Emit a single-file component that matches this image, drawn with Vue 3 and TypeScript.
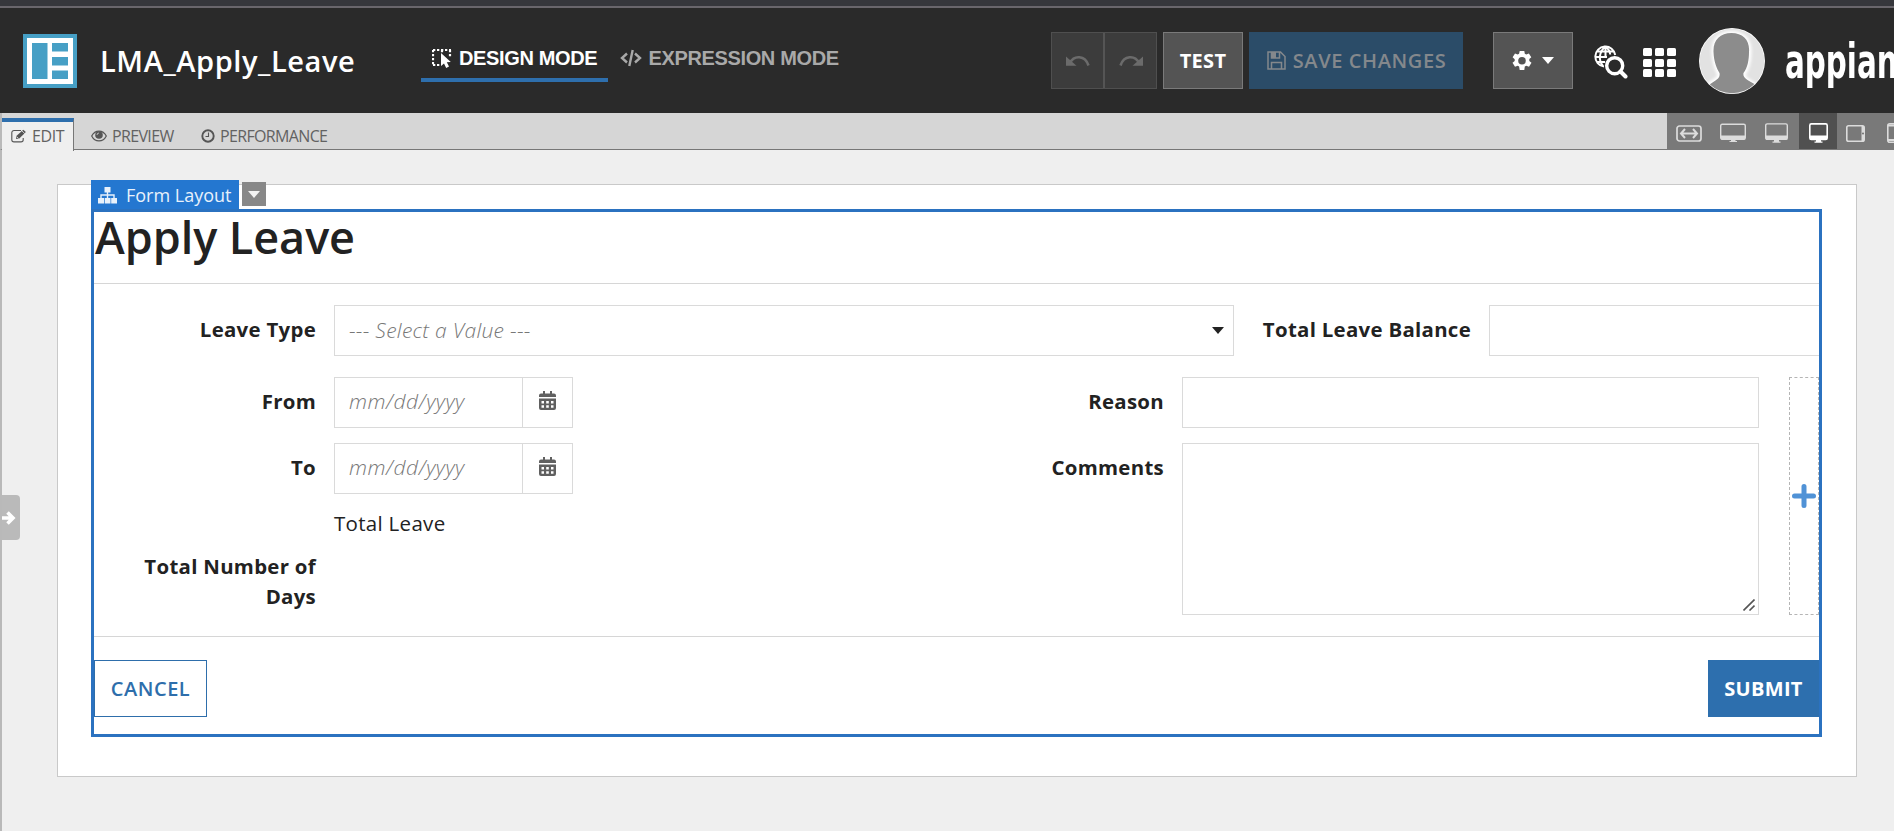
<script setup lang="ts">
import { ref } from 'vue'

interface Tab { id: string; label: string }
const tabs: Tab[] = [
  { id: 'edit', label: 'EDIT' },
  { id: 'preview', label: 'PREVIEW' },
  { id: 'performance', label: 'PERFORMANCE' },
]
const activeTab = ref('edit')
const dates = ['From', 'To']
</script>

<template>
  <div class="page">
    <div class="strip"></div>
    <header class="header">
      <svg class="app-icon" viewBox="0 0 54 54"><path fill="#469fc5" d="M0 0h54v54H0z" /><path fill="#fff" d="M4 4h46v46H4z" /><path fill="#469fc5" d="M9 9h15.500v36H9zM29 9h16v8.500H29zM29 23h16v8.500H29zM29 36.500h16V45H29z" /></svg>
      <h1 class="app-title"><span>LMA_Apply_Leave</span></h1>
      <nav class="modes">
        <div class="mode on">
          <svg class="i-design" viewBox="0 0 20 20"><path d="M1 1h18M1 1v16M1 16h7M18 1v7M10 1v3" fill="none" stroke="#fff" stroke-width="2.200" stroke-dasharray="2.300 1.700" /><path d="M9 4v13l3-2.600 2.200 4.500 2.800-1.300-2.200-4.300 4-.3z" fill="#fff" /></svg>
          <span class="t-design">DESIGN MODE</span>
        </div>
        <div class="mode">
          <svg class="i-code" viewBox="0 0 22 18"><path d="M7 4.500 2 9l5 4.500M15 4.500 20 9l-5 4.500M12.700 1 9.300 17" fill="none" stroke="#a9a9a9" stroke-width="2.400" /></svg>
          <span class="t-expr">EXPRESSION MODE</span>
        </div>
      </nav>
      <div class="actions">
        <div class="history">
          <button class="hbtn"><svg viewBox="0 0 24 12"><path d="M4 8C8 0 19 0 22.500 10.500" fill="none" stroke="#6b6b6b" stroke-width="2.600" /><path d="M0 1.500 10.500 10.800H0z" fill="#6b6b6b" /></svg></button>
          <button class="hbtn"><svg viewBox="0 0 24 12"><path d="M20 8C16 0 5 0 1.500 10.500" fill="none" stroke="#6b6b6b" stroke-width="2.600" /><path d="M24 1.500 13.500 10.800H24z" fill="#6b6b6b" /></svg></button>
        </div>
        <button class="test"><span>TEST</span></button>
        <button class="save">
          <svg viewBox="0 0 19 19"><path d="M1 1h12.500L18 5.500V18H1zM4.500 18v-6.500h10V18M4.500 1v6h8V1" fill="none" stroke="#84888c" stroke-width="1.500" /><path d="M5 1h4v6H5z" fill="#84888c" /></svg>
          <span>SAVE CHANGES</span>
        </button>
        <button class="gear">
          <svg class="i-gear" viewBox="0 0 22 22"><path fill="#fff" fill-rule="evenodd" d="M8.700 1h4.600l.5 2.800 1.500.8 2.600-1.200 2.400 3.800-2 1.900v1.800l2.200 1.900-2.500 3.900-2.700-1-1.500.8-.5 3.500H8.700l-.6-3.500-1.400-.8-2.700 1L1.500 12.800 3.700 11V9.200L1.600 7.300 4 3.400l2.700 1.200 1.400-.8zM11 7a3.800 3.800 0 1 0 0 7.600A3.800 3.800 0 0 0 11 7z" /></svg>
          <svg class="caret" viewBox="0 0 12 7"><path fill="#fff" d="M0 0h12L6 7z" /></svg>
        </button>
      </div>
      <svg class="i-globe" viewBox="0 0 34 34"><g fill="none" stroke="#fff" stroke-width="2"><path d="M10 21.500A10 10 0 1 1 21.200 10M3 6.500h17M2 12h11M3 17h8" /><path d="M11.500 1.500C4.500 7 4.500 16 9 21M11.500 1.500c3 2.500 4.500 5 4.700 8M11.500 1.500v11" /></g><circle cx="20.700" cy="20.700" r="8" fill="#2a2a2a" stroke="#fff" stroke-width="3.400" /><path d="m26.500 26.500 5 5" stroke="#fff" stroke-width="4" stroke-linecap="round" /></svg>
      <div class="waffle"><i v-for="n in 9" :key="n"></i></div>
      <svg class="avatar" viewBox="0 0 66 66"><defs><clipPath id="round"><circle cx="33" cy="33" r="32.300" /></clipPath><filter id="halo"><feGaussianBlur stdDeviation="1.800" /></filter></defs><circle cx="33" cy="33" r="33" fill="#fff" /><g clip-path="url(#round)"><path fill="#e2e2e2" d="M0 0h66v66H0z" /><path d="M32.500 5C21 5 14 12 14.500 24c.3 10 3.500 18 5.500 22 1 4-3 6-11 11v15h48V57c-9-5-13-7-12-11 4-6 5.500-14 5.500-22C51 12 44 5 32.500 5z" fill="#fff" stroke="#fff" stroke-width="4" filter="url(#halo)" /><path d="M32.500 5C21 5 14 12 14.500 24c.3 10 3.500 17 6 21 1 5-3 7-11 12v15h48V57c-9-5-14-7-13-12 4-5 5.500-13 5.500-21C51 12 44 5 32.500 5z" fill="#8c8c8c" /></g></svg>
      <div class="brand"><span>appian</span></div>
    </header>

    <div class="toolbar">
      <div v-for="t in tabs" :key="t.id" class="tab" :class="[t.id, { current: t.id === activeTab }]" @click="activeTab = t.id">
        <svg v-if="t.id === 'edit'" viewBox="0 0 16 14"><path d="M10 1.500H3A2.200 2.200 0 0 0 .8 3.700v7A2.200 2.200 0 0 0 3 12.900h7a2.200 2.200 0 0 0 2.200-2.200V9" fill="none" stroke="#555" stroke-width="1.100" /><path d="m5 10 .6-3.300L12.300.8l2.600 2.300-6.600 6.300z" fill="#555" /><path d="m6 8 1.500 1.400M11 2l2.700 2.500" stroke="#efefef" stroke-width=".8" /></svg>
        <svg v-else-if="t.id === 'preview'" viewBox="0 0 16 12"><path d="M.7 6C4-.6 12-.6 15.300 6 12 12.600 4 12.600.7 6z" fill="none" stroke="#555" stroke-width="1.200" /><circle cx="8" cy="5" r="3.800" fill="#555" /><path d="M6 5a2 2 0 0 1 2-2" fill="none" stroke="#d6d6d6" stroke-width=".8" /></svg>
        <svg v-else viewBox="0 0 14 14"><circle cx="7" cy="7" r="5.700" fill="none" stroke="#555" stroke-width="1.900" /><path d="M7.500 3.500v4H4.500" fill="none" stroke="#555" stroke-width="1.100" /></svg>
        <span>{{ t.label }}</span>
      </div>
      <div class="devices">
        <div class="dev d1"><svg width="26" height="17" viewBox="0 0 26 17"><rect x="1" y="1" width="24" height="15" rx="2.500" fill="none" stroke="#dcdcdc" stroke-width="1.700" /><path d="M5 8.500h16M9 4 5 8.500 9 13M17 4l4 4.500-4 4.500" fill="none" stroke="#dcdcdc" stroke-width="2" /></svg></div>
        <div class="dev d2"><svg width="26" height="20" viewBox="0 0 26 20"><rect x=".7" y="1.200" width="24.600" height="15" rx="1.500" fill="none" stroke="#dcdcdc" stroke-width="1.400" /><path d="M1 12.500h24v4H1zM11 16h4.500v2H17v1H9.500v-1H11z" fill="#dcdcdc" /></svg></div>
        <div class="dev d3"><svg width="23" height="21" viewBox="0 0 23 21"><rect x=".7" y=".9" width="21.600" height="15.500" rx="1.500" fill="none" stroke="#dcdcdc" stroke-width="1.400" /><path d="M1 12.500h21v4H1zM9 16h5v2.500h1.500v1.200H7.500v-1.200H9z" fill="#dcdcdc" /></svg></div>
        <div class="dev d4"><svg width="19" height="21" viewBox="0 0 19 21"><rect x=".8" y=".9" width="17.400" height="15.500" rx="1.500" fill="none" stroke="#fff" stroke-width="1.600" /><path d="M1 12.500h17v4H1zM7 16h5v2.500h1.500v1.200h-8v-1.200H7z" fill="#fff" /></svg></div>
        <div class="dev d5"><svg width="19" height="17" viewBox="0 0 19 17"><rect x=".8" y=".8" width="17.400" height="15.400" rx="1.800" fill="none" stroke="#dcdcdc" stroke-width="1.600" /><path d="M15.500 1h2.500v15h-2.500z" fill="#dcdcdc" /><circle cx="17" cy="8.500" r=".9" fill="#666" /></svg></div>
        <div class="dev d6"><svg width="16" height="20" viewBox="0 0 16 20"><rect x=".8" y=".8" width="14.400" height="18.400" rx="2" fill="none" stroke="#dcdcdc" stroke-width="1.600" /><path d="M1 2.500h14M1 17h14" stroke="#dcdcdc" stroke-width="2" /></svg></div>
      </div>
    </div>

    <main class="workspace">
      <div class="drawer"><svg viewBox="0 0 14 14"><path d="M0 7h11M5.500 1.500 11 7l-5.500 5.500" fill="none" stroke="#fff" stroke-width="3.600" /></svg></div>
      <section class="sheet">
        <div class="tagbar">
          <div class="tag">
            <svg viewBox="0 0 19 17"><path d="M6.500 0h6v5.500h-6zM0 11h6v5.500H0zM6.700 11h5.800v5.500H6.700zM13.200 11H19v5.500h-5.800z" fill="#e8f1fb" /><path d="M9.500 5v6M3 11V8h13v3" fill="none" stroke="#e8f1fb" stroke-width="1.400" /></svg>
            <span>Form Layout</span>
          </div>
          <div class="tagmenu"><svg class="caret" viewBox="0 0 12 7"><path fill="#f3f3f3" d="M0 0h12L6 7z" /></svg></div>
        </div>
        <div class="selection">
          <h2 class="form-title"><span>Apply Leave</span></h2>
          <div class="rule"></div>
          <div class="row first">
            <label class="lbl"><span class="w-type">Leave Type</span></label>
            <div class="box select"><span class="ph sel">--- Select a Value ---</span><svg class="caret" viewBox="0 0 12 7"><path fill="#222" d="M0 0h12L6 7z" /></svg></div>
            <label class="lbl balance"><span>Total Leave Balance</span></label>
            <div class="box grow"></div>
          </div>
          <div class="columns">
            <div class="col">
              <div v-for="d in dates" :key="d" class="row date-row">
                <label class="lbl">{{ d }}</label>
                <div class="box date">
                  <span class="ph">mm/dd/yyyy</span>
                  <div class="cal"><svg viewBox="0 0 17 20"><path fill-rule="evenodd" fill="#606060" d="M0 6V4.500Q0 2.500 2 2.500h2V0h2v2.500h5V0h2v2.500h2q2 0 2 2V6zM0 7.500h17V17q0 2-2 2H2q-2 0-2-2zM2.500 10v2.500H5V10zm4.700 0v2.500h2.600V10zm4.800 0v2.500h2.500V10zM2.500 14.300v2.500H5v-2.500zm4.700 0v2.500h2.600v-2.500zm4.800 0v2.500h2.500v-2.500z" /></svg></div>
                </div>
              </div>
              <p class="total">Total Leave</p>
              <label class="lbl days">Total Number of Days</label>
            </div>
            <div class="col second">
              <div class="row"><label class="lbl">Reason</label><div class="box reason"></div></div>
              <div class="row"><label class="lbl">Comments</label><div class="box area"><svg viewBox="0 0 12 12"><path d="M.5 11.500l11-11M6.500 11.500l5-5" stroke="#555" stroke-width="1.600" /></svg></div></div>
            </div>
            <div class="add"><svg viewBox="0 0 24 24"><path d="M12 2.500v19M2.500 12h19" stroke="#5092d6" stroke-width="5" stroke-linecap="round" /></svg></div>
          </div>
          <div class="rule"></div>
          <div class="buttons"><button class="cancel"><span>CANCEL</span></button><button class="submit"><span>SUBMIT</span></button></div>
        </div>
      </section>
    </main>
  </div>
</template>

<style>
body { margin: 0; overflow: hidden; }
</style>

<style scoped>
* { box-sizing: border-box; }
.page { width: 1894px; height: 831px; overflow: hidden; background: #efefef; font-family: "Open Sans", "Noto Sans", sans-serif; color: #222; display: flex; flex-direction: column; }
svg { display: block; flex: none; }
span { white-space: nowrap; }
button { font-family: inherit; padding: 0; margin: 0; border: 0; display: flex; align-items: center; justify-content: center; }
.caret { width: 12px; height: 7px; }

.strip { height: 8px; flex: none; background: #36373c; border-bottom: 2px solid #69666c; }
.header { height: 105px; flex: none; background: #2a2a2a; display: flex; align-items: flex-start; overflow: hidden; }
.app-icon { width: 54px; height: 54px; margin: 26px 0 0 23px; }
.app-title { margin: 33px 0 0 23px; width: 321px; height: 40px; line-height: 40px; font-size: 29px; letter-spacing: .58px; font-weight: 600; color: #fff; flex: none; }
.modes { display: flex; margin-top: 38px; width: 630px; flex: none; font-family: "Liberation Sans", Arial, sans-serif; font-weight: 700; font-size: 20px; letter-spacing: -.36px; }
.mode { height: 36px; display: flex; align-items: flex-start; line-height: 24px; padding: 0 0 0 11px; color: #a9a9a9; }
.mode.on { width: 187px; border-bottom: 4px solid #2e6fad; color: #fff; }
.i-design { width: 20px; height: 20px; margin: 3px 7px 0 0; }
.i-code { width: 22px; height: 18px; margin: 3px 6.500px 0 1px; }
.actions { display: flex; margin-top: 24px; gap: 6px; }
.actions button { height: 57px; }
.history { display: flex; border: 1px solid #4f4f4f; background: #3c3c3c; width: 106px; height: 57px; }
.history .hbtn { width: 51px; height: 55px; background: transparent; }
.history .hbtn + .hbtn { width: 53px; border-left: 2px solid #555; }
.hbtn svg { width: 24px; height: 12px; }
.test { width: 80px; background: #545454; border: 1px solid #7a7a7a; color: #fff; font-size: 20px; font-weight: 700; letter-spacing: .3px; }
.save { width: 214px; background: #2b4c68; color: #84888c; font-size: 20px; font-weight: 600; letter-spacing: .6px; gap: 7px; padding-left: 1px; }
.save svg { width: 19px; height: 19px; }
.gear { width: 80px; margin-left: 24px; background: #545454; border: 1px solid #7a7a7a; gap: 9px; padding-right: 2px; }
.i-gear { width: 22px; height: 22px; }
.i-globe { width: 34px; height: 34px; margin: 37px 0 0 21px; }
.waffle { margin: 40px 0 0 15px; width: 33px; height: 29px; display: grid; grid-template-columns: repeat(3, 1fr); gap: 2.500px; flex: none; }
.waffle i { background: #fff; border-radius: 1.500px; }
.avatar { width: 66px; height: 66px; margin: 20px 0 0 23px; }
.brand { margin: 19px 0 0 20px; height: 74px; line-height: 68px; color: #fff; font-family: "DejaVu Sans Condensed", "DejaVu Sans", sans-serif; font-weight: 700; font-size: 48px; transform: scaleX(.68); transform-origin: 0 0; width: 200px; flex: none; }

.toolbar { height: 37px; flex: none; display: flex; background: #d6d6d6; border-bottom: 1px solid #777; border-left: 2px solid #b9b9b9; font-size: 16px; color: #626262; }
.tab { display: flex; align-items: center; height: 33px; margin-top: 5px; font-weight: 400; letter-spacing: -.65px; }
.tab span { padding-bottom: 1px; }
.tab.current { width: 72px; background: #efefef; border-top: 4px solid #2e6fad; border-right: 1px solid #777; z-index: 1; }
.tab.edit { letter-spacing: -.4px; }
.tab.edit svg { width: 16px; height: 14px; margin: -2px 5px 0 9px; }
.tab.preview { width: 110px; padding-top: 4px; }
.tab.preview svg { width: 16px; height: 12px; margin: -2px 5px 0 17px; }
.tab.performance { padding-top: 4px; }
.tab.performance svg { width: 14px; height: 14px; margin: -2px 5px 0 17px; }
.devices { margin-left: auto; width: 227px; height: 37px; background: #797979; display: flex; overflow: hidden; flex: none; }
.dev { height: 36px; flex: none; display: flex; padding-top: 10px; }
.d1 { width: 44px; padding: 12px 0 0 9px; }
.d2 { width: 45px; padding-left: 9px; }
.d3 { width: 43px; padding-left: 9px; }
.d4 { width: 38px; padding-left: 10px; background: #505050; }
.d5 { width: 50px; padding: 12px 0 0 9px; }
.d6 { width: 16px; padding-left: 0; }

.workspace { flex: 1; border-left: 2px solid #b9b9b9; padding: 34px 0 0 55px; position: relative; }
.drawer { position: absolute; left: 0; top: 345px; width: 18px; height: 45px; background: #bababa; border-radius: 0 4px 4px 0; display: flex; align-items: center; }
.drawer svg { width: 14px; height: 14px; }
.sheet { width: 1800px; height: 593px; background: #fff; border: 1px solid #c9c9c9; padding-left: 33px; }
.tagbar { display: flex; height: 29px; margin-top: -5px; align-items: flex-start; }
.tag { width: 148px; height: 29px; background: #2477d0; color: #e8f1fb; display: flex; align-items: center; padding-left: 7px; font-size: 18px; line-height: 29px; }
.tag span { padding-top: 1px; }
.tag svg { width: 19px; height: 17px; margin: 1px 9px 0 0; }
.tagmenu { width: 24px; height: 24px; margin: 2px 0 0 3px; background: #888; display: flex; align-items: center; justify-content: center; }
.selection { width: 1731px; height: 528px; border: 3px solid #2b72c0; }
.form-title { margin: 0; padding-left: 1px; height: 71px; line-height: 50px; font-size: 45px; font-weight: 600; letter-spacing: -.05px; }
.rule { height: 1px; background: #d6d6d6; }
.row { display: flex; }
.row.first { padding-top: 21px; height: 72px; }
.lbl { width: 222px; margin-right: 18px; padding-top: 9px; text-align: right; line-height: 30px; font-size: 20.400px; font-weight: 700; letter-spacing: .3px; flex: none; }
.box { height: 51px; border: 1px solid #dadada; background: #fff; flex: none; }
.select { width: 900px; display: flex; align-items: center; justify-content: space-between; padding: 0 9px 0 14px; }
.ph { font-size: 21px; font-style: italic; font-weight: 300; color: #777; line-height: 48px; letter-spacing: .3px; }
.ph.sel { padding-bottom: 1px; }
.date .ph { letter-spacing: .6px; }
.lbl.balance { width: 237px; }
.grow { flex: 1; border-right: 0; }
.columns { display: flex; margin-top: 21px; height: 259px; }
.date-row { margin-bottom: 15px; }
.date { width: 239px; display: flex; justify-content: space-between; padding-left: 14px; }
.date .ph { line-height: 47px; }
.cal { width: 50px; border-left: 1px solid #dadada; display: flex; justify-content: center; padding-top: 13px; }
.cal svg { width: 17px; height: 20px; }
.total { margin: -1px 0 0 240px; line-height: 30px; font-size: 20.500px; letter-spacing: .3px; font-weight: 400; }
.lbl.days { display: block; padding: 0 0 0 40px; margin: 13px 0 0; width: 222px; }
.col { width: 848px; flex: none; }
.col.second { width: 817px; display: flex; flex-direction: column; gap: 15px; }
.reason, .area { width: 577px; }
.area { height: 172px; display: flex; align-items: flex-end; justify-content: flex-end; padding: 0 3px 3px 0; }
.area svg { width: 12px; height: 12px; }
.add { margin-left: 30px; width: 30px; height: 238px; border: 1px dashed #b5b5b5; display: flex; align-items: center; justify-content: center; }
.add svg { width: 24px; height: 24px; }
.buttons { display: flex; justify-content: space-between; margin-top: 23px; }
.cancel, .submit { height: 57px; font-size: 20px; padding-bottom: 1px; }
.cancel { width: 113px; color: #2e6eab; border: 1px solid #2e6eab; background: #fff; font-weight: 600; letter-spacing: .55px; }
.submit { width: 111px; color: #fff; background: #2d6fae; font-weight: 700; letter-spacing: .3px; }
</style>
